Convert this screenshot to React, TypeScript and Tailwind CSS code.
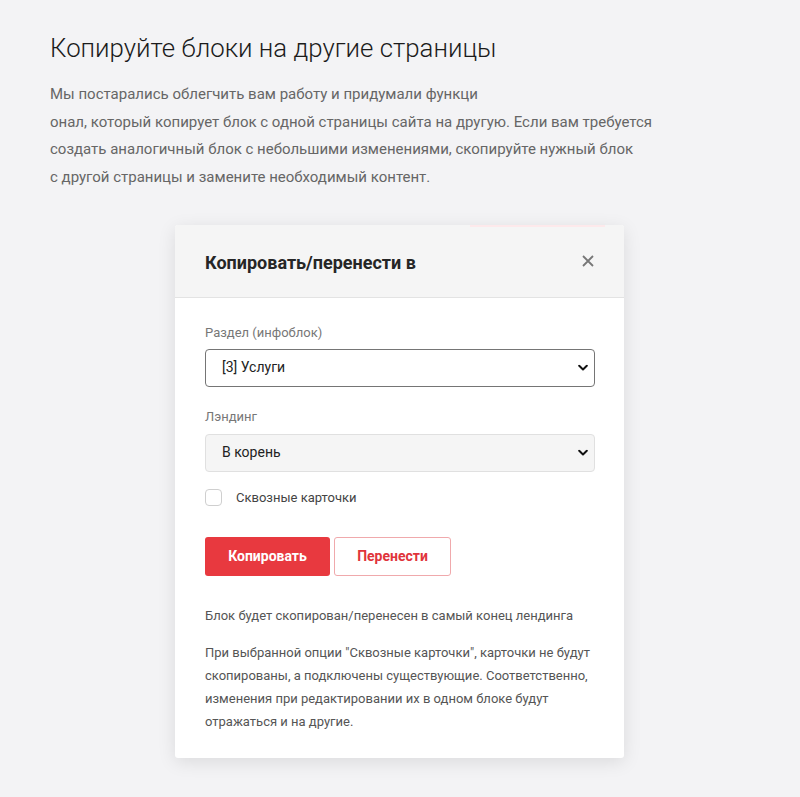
import React from "react";

function Chevron() {
  return (
    <svg width="10" height="7" viewBox="0 0 10 7" className="pointer-events-none absolute right-[6px] top-1/2 -translate-y-1/2">
      <path d="M1.2 1.3 L5 5 L8.8 1.3" fill="none" stroke="#111" strokeWidth="2" strokeLinecap="round" strokeLinejoin="round" />
    </svg>
  );
}

export default function App() {
  return (
    <div className="min-h-[797px] bg-[#f3f3f5] pl-[50px] pt-[30px] pb-[40px] font-['Roboto',sans-serif]">
      <h1 className="text-[25.8px] font-light leading-[36px] text-[#1b1b1b]">Копируйте блоки на другие страницы</h1>
      <div className="mt-[15px] text-[15px] leading-[27.7px] text-[#666]">
        <p>Мы постарались облегчить вам работу и придумали функци</p>
        <p>онал, который копирует блок с одной страницы сайта на другую. Если вам требуется</p>
        <p>создать аналогичный блок с небольшими изменениями, скопируйте нужный блок</p>
        <p>с другой страницы и замените необходимый контент.</p>
      </div>

      <div className="relative ml-[125px] mt-[33px] w-[449px] rounded-[3px] bg-white shadow-[0_4px_18px_rgba(0,0,0,0.10)]">
        <div className="absolute left-[295px] top-0 h-[2px] w-[135px] bg-[#fde9eb]" />
        <div className="flex h-[73px] items-center justify-between rounded-t-[3px] border-b border-[#e3e3e3] bg-[#f5f5f5] pl-[30px] pr-[30px] pt-[3px]">
          <h2 className="text-[18px] font-bold text-[#262626]">Копировать/перенести в</h2>
          <svg width="12" height="12" viewBox="0 0 12 12" className="-mt-[3px]">
            <path d="M1 1 L11 11 M11 1 L1 11" stroke="#777" strokeWidth="1.8" />
          </svg>
        </div>

        <div className="px-[30px] pt-[27px] pb-[25px]">
          <div className="text-[13px] leading-[16px] text-[#777]">Раздел (инфоблок)</div>
          <div className="relative mt-[8px] h-[38px] w-[390px] rounded-[4px] border border-[#757575] bg-white">
            <div className="flex h-full items-center pl-[16px] text-[14px] text-[#222]">[3] Услуги</div>
            <Chevron />
          </div>

          <div className="mt-[22px] text-[13px] leading-[16px] text-[#777]">Лэндинг</div>
          <div className="relative mt-[9px] h-[38px] w-[390px] rounded-[4px] border border-[#e0e0e0] bg-[#f5f5f5]">
            <div className="flex h-full items-center pl-[16px] text-[14px] text-[#222]">В корень</div>
            <Chevron />
          </div>

          <label className="mt-[16px] flex items-center">
            <span className="h-[17px] w-[17px] rounded-[4px] border border-[#cfcfcf] bg-white" />
            <span className="ml-[14px] text-[13px] text-[#444]">Сквозные карточки</span>
          </label>

          <div className="mt-[30px] flex gap-[4px]">
            <button className="h-[39px] w-[125px] rounded-[3px] bg-[#e8393f] text-[14px] font-bold text-white">Копировать</button>
            <button className="h-[39px] w-[117px] rounded-[3px] border border-[#f0a9ac] bg-white text-[14px] font-bold text-[#e0343b]">Перенести</button>
          </div>

          <p className="mt-[30px] text-[13px] leading-[20px] text-[#555]">Блок будет скопирован/перенесен в самый конец лендинга</p>
          <p className="mt-[15px] text-[13px] leading-[23px] text-[#555]">
            При выбранной опции "Сквозные карточки", карточки не будут скопированы, а подключены существующие. Соответственно, изменения при редактировании их в одном блоке будут отражаться и на другие.
          </p>
        </div>
      </div>
    </div>
  );
}
